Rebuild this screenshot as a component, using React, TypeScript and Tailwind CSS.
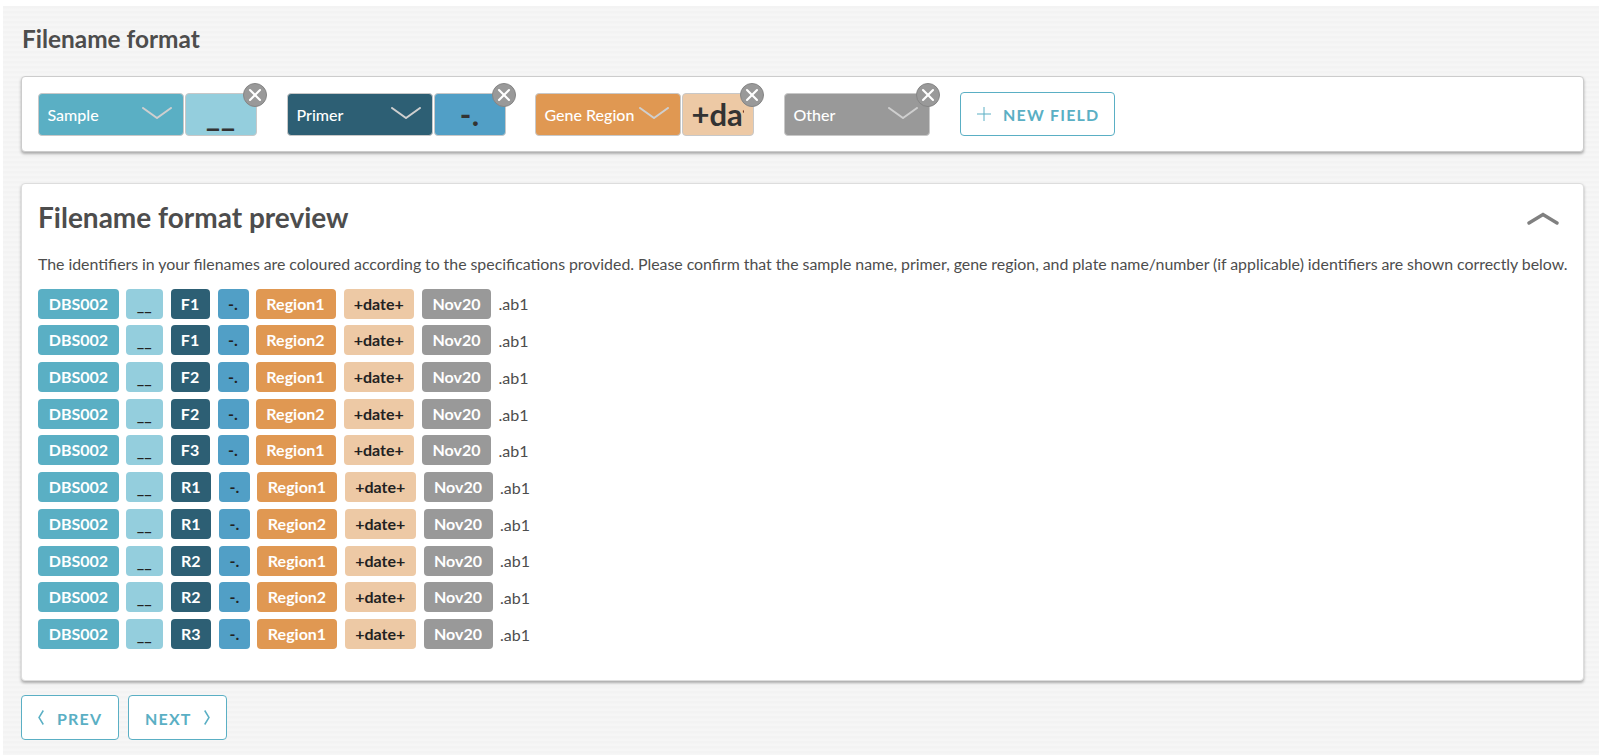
import { LuX } from 'react-icons/lu';

type Field = {
  label: string;
  color: string;
  separator?: string;
  separatorColor?: string;
  className: string;
};

const fields: Field[] = [
  { label: 'Sample', color: 'bg-[#5aafc4]', separator: '__', separatorColor: 'bg-[#94cedd]', className: 'mr-[30px]' },
  { label: 'Primer', color: 'bg-[#2d5f74]', separator: '-.', separatorColor: 'bg-[#519fc6]', className: 'mr-[29px]' },
  { label: 'Gene Region', color: 'bg-[#e09852]', separator: '+date+', separatorColor: 'bg-[#edc9a5]', className: 'mr-[30px]' },
  { label: 'Other', color: 'bg-[#999999]', className: 'mr-[30.5px]' },
];

const filenames = [
  { primer: 'F1', region: 'Region1' },
  { primer: 'F1', region: 'Region2' },
  { primer: 'F2', region: 'Region1' },
  { primer: 'F2', region: 'Region2' },
  { primer: 'F3', region: 'Region1' },
  { primer: 'R1', region: 'Region1' },
  { primer: 'R1', region: 'Region2' },
  { primer: 'R2', region: 'Region1' },
  { primer: 'R2', region: 'Region2' },
  { primer: 'R3', region: 'Region1' },
];

function FieldSelect({ field }: { field: Field }) {
  return (
    <div className={`relative flex h-[43px] gap-px ${field.className}`}>
      <button
        type="button"
        className={`flex w-[145.5px] items-center justify-between rounded-[4px] border border-[#c8c8c8] pl-[8.5px] pr-[11px] pt-px text-[16px] font-medium text-white ${field.color}`}
      >
        <span className="whitespace-nowrap">{field.label}</span>
        <svg className="-mt-1 h-3 w-[30px] shrink-0" viewBox="0 0 30 12" fill="none" stroke="#cfcfcf" strokeWidth={2}>
          <path strokeLinecap="round" d="M1 1l14 10L29 1" />
        </svg>
      </button>
      {field.separator && (
        <div
          className={`flex w-[72.5px] items-center overflow-hidden rounded-[4px] border border-[#c8c8c8] px-[9px] text-[31px] font-bold text-[#333] ${field.separatorColor}`}
        >
          <span className={`w-full overflow-hidden ${field.separator.length > 2 ? '' : 'text-center tracking-[0.6px]'}`}>
            {field.separator}
          </span>
        </div>
      )}
      <button
        type="button"
        aria-label="Remove field"
        className="absolute -right-[10px] -top-[10px] flex size-6 items-center justify-center rounded-full border border-[#858585] bg-[#999] text-white"
      >
        <LuX className="size-[20px]" strokeWidth={2.5} />
      </button>
    </div>
  );
}

function Chip({ text, className }: { text: string; className: string }) {
  return (
    <span className={`flex h-[30px] shrink-0 items-center justify-center rounded-[4px] text-[16px] font-bold ${className}`}>
      {text}
    </span>
  );
}

export default function App() {
  return (
    <div className="h-[755px] w-[1599px] overflow-hidden bg-white pl-[3px] pt-[6px] font-['Lato',sans-serif] text-[#4d4d4d]">
      <div className="h-full bg-[repeating-linear-gradient(180deg,#f3f3f3_0px,#f3f3f3_2px,#f6f6f6_3px,#f6f6f6_5px)] pl-[18px] pr-[15px] pt-[17px]">
        <h2 className="h-[53px] pl-px text-[24.4px] font-bold leading-[32px]">Filename format</h2>

        <div className="flex h-[76px] items-center rounded-[4px] border border-[#ccc] bg-white pl-[16px] shadow-[0_2px_3px_rgba(0,0,0,0.3)]">
          {fields.map((field) => (
            <FieldSelect key={field.label} field={field} />
          ))}
          <button
            type="button"
            className="flex h-[44px] w-[155px] items-center rounded-[4px] border-[1.5px] border-[#5aafc4] pl-[15px] pt-[2px] text-[16px] font-bold tracking-[1.2px] text-[#5aafc4]"
          >
            <svg className="-mt-0.5 mr-[11px] size-4" viewBox="0 0 16 16" stroke="currentColor" strokeWidth={1}>
              <path d="M8 1v14M1 8h14" />
            </svg>
            NEW FIELD
          </button>
        </div>

        {/* Preview */}
        <div className="mt-[31px] h-[498px] rounded-[4px] border border-[#ddd] bg-white pl-[16px] pt-[13px] shadow-[0_2px_3px_rgba(0,0,0,0.3)]">
          <div className="flex items-center justify-between pr-[24px]">
            <h2 className="text-[28px] font-bold leading-[40px]">Filename format preview</h2>
            <svg className="mt-[3px] h-[13px] w-[32px]" viewBox="0 0 32 13" fill="none" stroke="#808080" strokeWidth={3.4}>
              <path strokeLinecap="round" d="M2 11l14-8.5 14 8.5" />
            </svg>
          </div>
          <p className="mt-[15px] whitespace-nowrap text-[15.9px] leading-[24px] [word-spacing:-0.17px]">
            The identifiers in your filenames are coloured according to the specifications provided. Please confirm that
            the sample name, primer, gene region, and plate name/number (if applicable) identifiers are shown correctly below.
          </p>
          <div className="mt-[12.7px] flex flex-col gap-[6.7px]">
            {filenames.map(({ primer, region }) => (
              <div key={primer + region} className="flex items-center">
                <Chip text="DBS002" className="mr-[7px] w-[81px] bg-[#5aafc4] text-white" />
                <Chip text="__" className="mr-2 w-[36.5px] bg-[#94cedd] pt-[2px] text-[#222]" />
                <Chip text={primer} className={`mr-2 bg-[#2d5f74] text-white ${primer.startsWith('R') ? 'w-[40.5px]' : 'w-[39px]'}`} />
                <Chip text="-." className="mr-[7px] w-[31px] bg-[#519fc6] text-[#222]" />
                <Chip text={region} className="mr-2 w-[80px] bg-[#e09852] text-white" />
                <Chip text="+date+" className="mr-2 w-[70.5px] bg-[#edc9a5] text-[#222]" />
                <Chip text="Nov20" className="mr-[7.5px] w-[69px] bg-[#999] text-white" />
                <span className="pt-[1.5px] text-[16px] leading-[20px]">.ab1</span>
              </div>
            ))}
          </div>
        </div>

        <div className="mt-[14px] flex gap-[9px] text-[16px] font-bold tracking-[1.2px] text-[#5aafc4]">
          <button type="button" className="flex h-[45px] w-[98px] items-center rounded-[4px] border-[1.5px] border-[#5aafc4] bg-white pl-4 pt-[2px]">
            <svg className="-mt-0.5 mr-[13px] h-[15px] w-[6px]" viewBox="0 0 6 15" fill="none" stroke="currentColor" strokeWidth={1.5}>
              <path d="M5.3.5L1 7.5l4.3 7" />
            </svg>
            PREV
          </button>
          <button type="button" className="flex h-[45px] w-[99px] items-center rounded-[4px] border-[1.5px] border-[#5aafc4] bg-white pl-4 pt-[2px]">
            NEXT
            <svg className="-mt-0.5 ml-[12px] h-[15px] w-[6px]" viewBox="0 0 6 15" fill="none" stroke="currentColor" strokeWidth={1.5}>
              <path d="M.7.5L5 7.5l-4.3 7" />
            </svg>
          </button>
        </div>
      </div>
    </div>
  );
}
